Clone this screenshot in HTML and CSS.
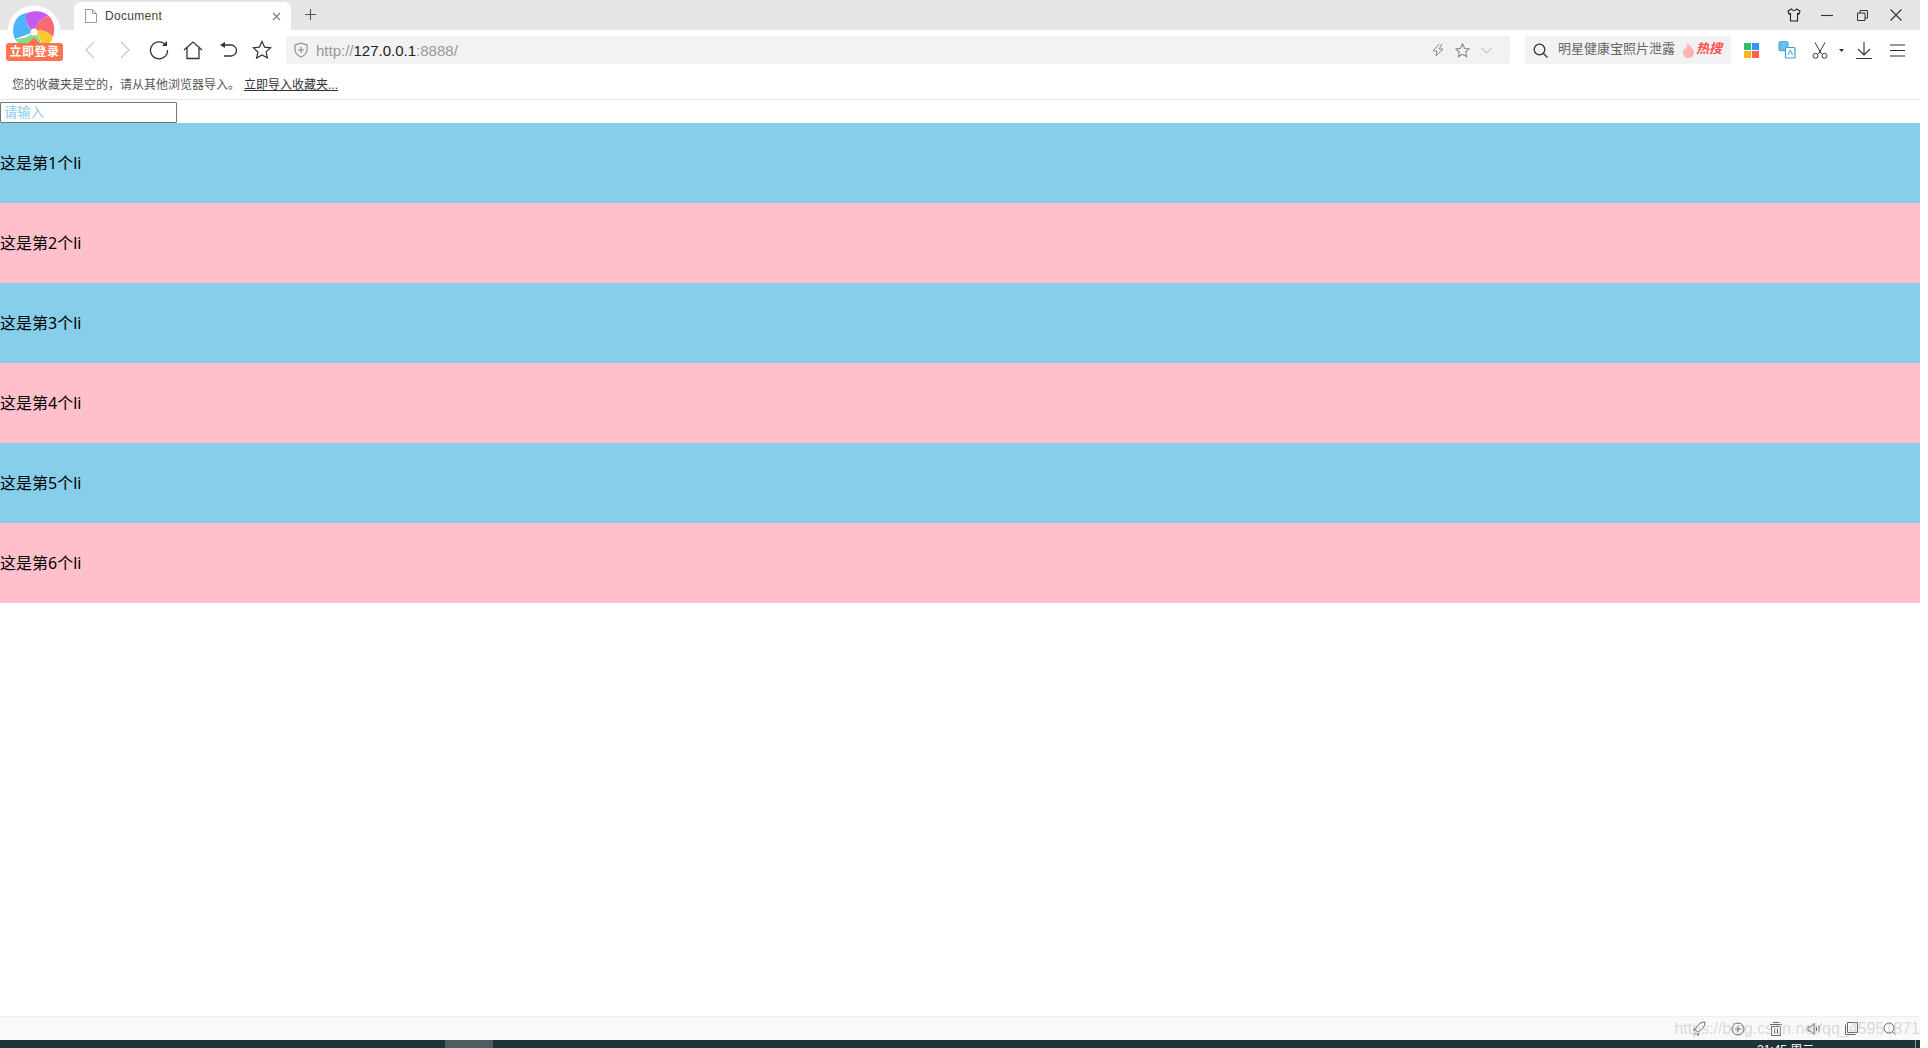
FILE: index.html
```html
<!DOCTYPE html>
<html lang="zh">
<head>
<meta charset="utf-8">
<title>Document</title>
<link rel="stylesheet" href="styles.css">
</head>
<body>
<div class="window">
  <header class="tabstrip">
    <div class="tab">
      <svg class="tab-doc" width="12" height="14" viewBox="0 0 12 14"><path d="M.5.5h7l4 4v9H.5zM7.5.5v4h4" fill="#fff" stroke="#999"/></svg>
      <span class="tab-title">Document</span>
      <svg class="tab-close" width="9" height="9" viewBox="0 0 9 9"><path d="M1 1l7 7M8 1L1 8" stroke="#777" stroke-width="1.1"/></svg>
    </div>
    <svg class="new-tab" width="13" height="13" viewBox="0 0 13 13"><path d="M6.500 1v11M1 6.500h11" stroke="#555" stroke-width="1.100"/></svg>
    <div class="win-controls">
      <svg width="14" height="14" viewBox="0 0 14 14"><path d="M4.500 1L1 3l1 3 1.500-.5V13h7V5.500L12 6l1-3-3.500-2c-1 2-4 2-5 0z" fill="none" stroke="#222" stroke-width="1.100"/></svg>
      <svg width="12" height="12" viewBox="0 0 12 12"><path d="M0 6.500h12" stroke="#333" stroke-width="1.100"/></svg>
      <svg width="11" height="11" viewBox="0 0 11 11"><path d="M.5 3h7.500v7.500H.5zM3 3V.5h7.500V8H8" fill="none" stroke="#333"/></svg>
      <svg width="12" height="12" viewBox="0 0 12 12"><path d="M.5.5l11 11M11.500.5l-11 11" stroke="#333" stroke-width="1.100"/></svg>
    </div>
  </header>

  <div class="logo">
    <svg width="54" height="54" viewBox="0 0 54 54">
      <circle cx="27" cy="27" r="26.500" fill="#fff"/>
      <path d="M27 27L8 34C3 22 9 9 20 8c-3 7 0 14 7 19z" fill="#4db4fb"/>
      <path d="M27 27C19 21 17 12 20 8c8-3 17-2 22 3-7 1-13 7-15 16z" fill="#c45cf0"/>
      <path d="M27 27c1-8 8-15 15-16 6 6 6 15 4 21-6-7-13-8-19-5z" fill="#fb6a73"/>
      <path d="M27 27c6-3 14-1 19 5-2 6-6 10-12 12 1-7-1-13-7-17z" fill="#fdc82e"/>
      <path d="M27 27c5 4 8 10 7 17-10 3-21-1-26-10 7 0 14-2 19-7z" fill="#7fe08a"/>
      <circle cx="27" cy="27" r="3.500" fill="#fff"/>
    </svg>
    <span class="logo-notch"></span>
    <span class="logo-badge">立即登录</span>
  </div>

  <nav class="toolbar">
    <div class="nav-buttons">
      <svg width="14" height="18" viewBox="0 0 14 18"><path d="M11 1L3 9l8 8" fill="none" stroke="#c6c6c6" stroke-width="1.200"/></svg>
      <svg width="14" height="18" viewBox="0 0 14 18"><path d="M3 1l8 8-8 8" fill="none" stroke="#c6c6c6" stroke-width="1.200"/></svg>
      <svg width="20" height="20" viewBox="0 0 20 20"><path d="M17 5.500A8.500 8.500 0 1 0 18.500 10" fill="none" stroke="#333" stroke-width="1.300"/><path d="M18 1v5h-5z" fill="#333"/></svg>
      <svg width="20" height="20" viewBox="0 0 20 20"><path d="M1 10l9-8 9 8M4 8v10.500h12V8" fill="none" stroke="#333" stroke-width="1.300"/></svg>
      <svg width="18" height="18" viewBox="0 0 18 18"><path d="M3 4h9a5 5 0 0 1 0 11H5" fill="none" stroke="#333" stroke-width="1.300"/><path d="M6 1v6L1 4z" fill="#333"/></svg>
      <svg width="20" height="20" viewBox="0 0 20 20"><path d="M10 1.500l2.600 5.600 6 .7-4.500 4.100 1.300 6L10 15l-5.400 3 1.300-6L1.400 7.800l6-.7z" fill="none" stroke="#333" stroke-width="1.200"/></svg>
    </div>
    <div class="address">
      <svg class="shield" width="14" height="16" viewBox="0 0 14 16"><path d="M7 1l6 2v5c0 3-3 6-6 7-3-1-6-4-6-7V3z" fill="none" stroke="#888" stroke-width="1.100"/><path d="M7 5v6M4 8h6" stroke="#888"/></svg>
      <span class="url"><span class="url-dim">http://</span>127.0.0.1<span class="url-dim">:8888/</span></span>
      <div class="address-tools">
        <svg width="12" height="14" viewBox="0 0 12 14"><path d="M7 1L1 8h4l-1 5 7-7H7l3-5" fill="none" stroke="#888"/></svg>
        <svg width="15" height="15" viewBox="0 0 15 15"><path d="M7.500 1l2 4.300 4.500.6-3.300 3.100.9 4.600-4.100-2.300-4.100 2.300.9-4.600L1 5.900l4.500-.6z" fill="none" stroke="#888" stroke-width="1.100"/></svg>
        <svg width="11" height="7" viewBox="0 0 11 7"><path d="M.5 1l5 5 5-5" fill="none" stroke="#aaa"/></svg>
      </div>
    </div>
    <div class="search">
      <svg width="15" height="15" viewBox="0 0 15 15"><circle cx="6.500" cy="6.500" r="5.300" fill="none" stroke="#333" stroke-width="1.300"/><path d="M10.500 10.500l4 4" stroke="#333" stroke-width="1.300"/></svg>
      <span class="search-text">明星健康宝照片泄露</span>
      <svg width="13" height="15" viewBox="0 0 13 15"><path d="M6 0c1 3 6 5 6 9.500a5.500 5.500 0 0 1-11 0C1 7 2 6 3 4.500c0 1.500.5 2.500 1 2.500 1-2 0-4 2-7z" fill="#ffb3b3"/></svg>
      <span class="hot">热搜</span>
    </div>
    <div class="ext-icons">
      <span class="tiles"><i class="t-green"></i><i class="t-blue"></i><i class="t-yellow"></i><i class="t-red"></i></span>
      <svg class="ext-translate" width="18" height="18" viewBox="0 0 18 18"><rect x="1" y=".7" width="9" height="9" rx="1" fill="#6fbdea" stroke="#3aa0de"/><rect x="7.500" y="6.500" width="9.500" height="10.500" rx="1" fill="#fff" stroke="#3aa0de" stroke-width="1.200"/><path d="M10 14l2.300-5 2.300 5" fill="none" stroke="#3aa0de"/></svg>
      <svg class="ext-cut" width="16" height="17" viewBox="0 0 16 17"><path d="M3 .5l6.500 11.500M13 .5L6.500 12" fill="none" stroke="#333"/><circle cx="3.500" cy="13.800" r="2.500" fill="none" stroke="#333"/><circle cx="12.500" cy="13.800" r="2.500" fill="none" stroke="#333"/></svg>
      <svg class="ext-caret" width="5" height="3" viewBox="0 0 5 3"><path d="M0 0h5L2.500 3z" fill="#333"/></svg>
      <svg class="ext-down" width="16" height="17" viewBox="0 0 16 17"><path d="M8 0v13M2 7l6 6 6-6M0 16.500h16" fill="none" stroke="#333" stroke-width="1.100"/></svg>
      <svg class="ext-menu" width="15" height="13" viewBox="0 0 15 13"><path d="M0 1h15M0 6.500h15M0 12h15" stroke="#333" stroke-width="1.100"/></svg>
    </div>
  </nav>

  <div class="bookmarks">
    <span>您的收藏夹是空的，请从其他浏览器导入。</span>
    <a class="import-link">立即导入收藏夹...</a>
  </div>

  <main class="page">
    <input class="field" type="text" placeholder="请输入">
    <ul class="list">
      <li>这是第1个li</li>
      <li>这是第2个li</li>
      <li>这是第3个li</li>
      <li>这是第4个li</li>
      <li>这是第5个li</li>
      <li>这是第6个li</li>
    </ul>
  </main>

  <footer class="statusbar">
    <svg width="14" height="15" viewBox="0 0 14 15"><path d="M13 1C8 1 4 5 3.500 9l2 2C9 10 13 6 13 1zM3 7L1 9l2 .5M7 12l-1 2.500-1.500-2M2 14l2-2" fill="none" stroke="#666"/></svg>
    <svg width="14" height="14" viewBox="0 0 14 14"><circle cx="7" cy="7" r="6" fill="none" stroke="#666"/><path d="M7 4v6M4 7h6" stroke="#666"/></svg>
    <svg width="12" height="14" viewBox="0 0 12 14"><path d="M0 2.500h12M3 .5h6M1.500 4.500h9v9h-9zM4.500 6.500v5M7.500 6.500v5" fill="none" stroke="#666"/></svg>
    <svg width="13" height="14" viewBox="0 0 13 14"><path d="M1 5h2.500L7 1.500v11L3.500 9H1zM9.500 5v4M12 3.500v6" fill="none" stroke="#666"/></svg>
    <svg width="13" height="13" viewBox="0 0 13 13"><path d="M.5 2.500v10h10M2.500.5h10v10h-10z" fill="none" stroke="#666"/></svg>
    <svg width="13" height="13" viewBox="0 0 13 13"><circle cx="6" cy="6" r="5" fill="none" stroke="#666"/><path d="M9.500 9.500l3 3" stroke="#666"/></svg>
    <span class="watermark">https://blog.csdn.net/qq_45951871</span>
  </footer>
  <div class="taskbar">
    <span class="task-active"></span>
    <span class="clock">21:45 周二</span>
    <span class="task-edge"></span>
  </div>
</div>
</body>
</html>
```
FILE: styles.css
```css
* { box-sizing: border-box; }
html, body { margin: 0; height: 100%; overflow: hidden; background: #fff; }
body { font-family: "Liberation Sans", "Noto Sans CJK SC", sans-serif; }
.window { position: relative; width: 1920px; height: 1048px; display: flex; flex-direction: column; }

.tabstrip { height: 30px; background: #e6e6e6; display: flex; align-items: flex-start; flex: none; padding-left: 74px; }
.tab { width: 217px; height: 28px; margin-top: 2px; background: #fff; border-radius: 7px 7px 0 0; display: flex; align-items: center; padding: 0 10px 0 11px; }
.tab-doc { margin-right: 8px; }
.tab-title { font-size: 12px; color: #444; letter-spacing: .3px; flex: 1; }
.new-tab { margin: 8px 0 0 13px; }
.win-controls { margin-left: auto; display: flex; align-items: center; height: 30px; padding-right: 18px; }
.win-controls svg:nth-child(2) { margin-left: 20px; }
.win-controls svg:nth-child(3) { margin-left: 24px; }
.win-controls svg:nth-child(4) { margin-left: 22px; }

.logo { position: absolute; left: 7px; top: 5px; width: 54px; height: 56px; }
.logo-notch { position: absolute; left: 23px; top: 34px; width: 8px; height: 8px; background: #ff7350; transform: rotate(45deg); }
.logo-badge { position: absolute; top: 38px; left: -1px; width: 57px; height: 18px; border-radius: 3px; background: #ff7350; color: #fff; font-size: 12px; font-weight: 700; line-height: 18px; text-align: center; letter-spacing: .5px; }

.toolbar { height: 40px; flex: none; display: flex; align-items: center; padding-left: 73px; }
.nav-buttons { display: grid; grid-template-columns: repeat(6, 34.400px); justify-items: center; align-items: center; width: 213px; }
.address { width: 1224px; height: 28px; background: #f2f2f2; border-radius: 3px; display: flex; align-items: center; padding: 0 18px 0 8px; }
.shield { margin-right: 8px; }
.url { font-size: 15px; color: #222; }
.url-dim { color: #999; }
.address-tools { margin-left: auto; display: flex; align-items: center; gap: 11px; }
.search { width: 206px; height: 28px; margin-left: 15px; background: #f2f2f2; border-radius: 3px; display: flex; align-items: center; padding-left: 8px; }
.search-text { font-size: 13px; line-height: 14px; color: #666; margin: 0 7px 2px 10px; white-space: nowrap; }
.hot { font-size: 13px; line-height: 14px; font-weight: 700; font-style: italic; color: #ff4f4f; margin: 0 0 2px 1px; }
.ext-icons { display: flex; align-items: center; margin-left: 13px; }
.ext-translate { margin-left: 19px; }
.ext-cut { margin-left: 16px; }
.ext-caret { margin-left: 11px; }
.ext-down { margin-left: 12px; }
.ext-menu { margin-left: 18px; }
.tiles { width: 15px; height: 15px; display: grid; grid-template-columns: 7px 7px; grid-template-rows: 7px 7px; gap: 1px; }
.tiles i { display: block; }
.t-green { background: #2fbf6c; }
.t-blue { background: #2f97fb; }
.t-yellow { background: #ffb41e; }
.t-red { background: #ff6142; }

.bookmarks { height: 30px; flex: none; border-bottom: 1px solid #e6e6e6; display: flex; align-items: center; padding: 0 0 2px 12px; font-size: 12px; color: #555; gap: 4px; }
.import-link { color: #333; text-decoration: underline; }

.page { flex: 1; min-height: 0; padding-top: 2px; }
.field { display: block; width: 177px; height: 21px; padding: 1px 3px; border: 1px solid #767676; border-radius: 1px; font-size: 13.330px; font-family: inherit; outline: 0; }
.field::placeholder { color: skyblue; opacity: 1; }
.list { list-style: none; margin: 0; padding: 0; }
.list li { height: 80px; line-height: 80px; font-size: 16px; font-family: "Noto Sans", "Noto Sans CJK SC", sans-serif; color: #000; }
.list li:nth-child(odd) { background: skyblue; }
.list li:nth-child(even) { background: pink; }

.statusbar { position: relative; height: 24px; flex: none; background: #f9f9f9; border-top: 1px solid #eee; display: flex; align-items: center; justify-content: flex-end; gap: 25px; padding-right: 24px; }
.watermark { position: absolute; right: 0; top: 3px; font-size: 16px; color: rgba(190,190,190,.55); white-space: nowrap; }
.taskbar { position: relative; height: 8px; flex: none; background: #1e3335; overflow: hidden; }
.task-active { position: absolute; left: 445px; top: 0; width: 48px; height: 8px; background: #505e60; }
.clock { position: absolute; left: 1757px; top: 3px; font-size: 12px; line-height: 14px; color: #fff; }
.task-edge { position: absolute; left: 1915px; top: 0; width: 1px; height: 8px; background: #8a9899; }
```
